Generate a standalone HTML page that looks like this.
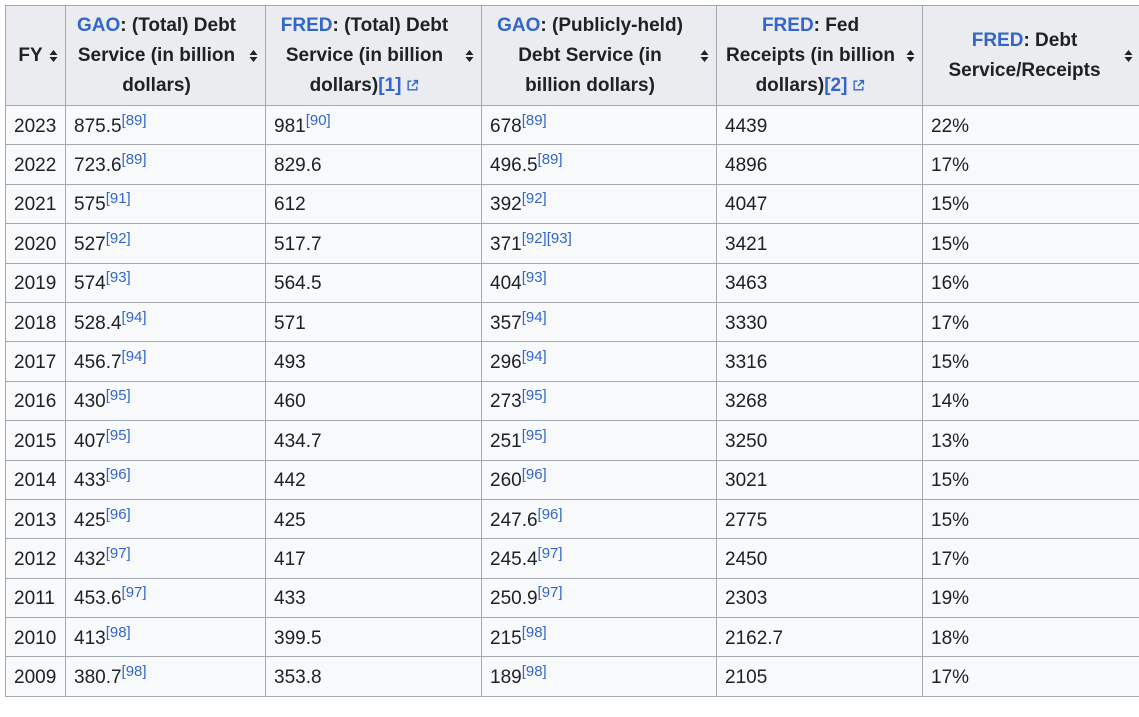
<!DOCTYPE html>
<html><head><meta charset="utf-8"><style>
body{margin:0;background:#fff;font-family:"Liberation Sans",Arial,sans-serif;color:#202122;}
table{position:absolute;left:5px;top:5px;border-collapse:collapse;table-layout:fixed;width:1135px;font-size:19px;background:#f8f9fa;}
th,td{border:1px solid #a2a9b1;}
th{background:#eaecf0;font-weight:bold;height:99px;line-height:30px;position:relative;text-align:center;padding:0 26px 0 8px;}
td{height:35.4px;padding:3px 8px 0 8px;line-height:20px;}
a{color:#3366cc;text-decoration:none}
sup{font-size:15px;line-height:0;vertical-align:7px;}
.s{position:absolute;right:7px;top:50%;margin-top:-8px;width:9px;height:16px;}
.ext{display:inline-block;vertical-align:-1px;margin-left:5px}
</style></head><body>
<table>
<colgroup><col style="width:60px"><col style="width:200px"><col style="width:216px"><col style="width:235px"><col style="width:206px"><col style="width:218px"></colgroup>
<tr>
<th style="padding:0 18px 0 8px">FY<svg class="s" viewBox="0 0 9 16"><path d="M4.5 2L8.5 7H0.5z M4.5 14L8.5 9H0.5z" fill="#202122"/></svg></th>
<th><a>GAO</a>: (Total) Debt Service (in billion dollars)<svg class="s" viewBox="0 0 9 16"><path d="M4.5 2L8.5 7H0.5z M4.5 14L8.5 9H0.5z" fill="#202122"/></svg></th>
<th><a>FRED</a>: (Total) Debt Service (in billion dollars)<a>[1]</a><svg class="ext" width="13" height="13" viewBox="0 0 12 12"><path d="M5 2H2v8h8V7M7 1.5h3.5V5M10.5 1.5L5.5 6.5" stroke="#3366cc" stroke-width="1.3" fill="none"/></svg><svg class="s" viewBox="0 0 9 16"><path d="M4.5 2L8.5 7H0.5z M4.5 14L8.5 9H0.5z" fill="#202122"/></svg></th>
<th><a>GAO</a>: (Publicly-held) Debt Service (in billion dollars)<svg class="s" viewBox="0 0 9 16"><path d="M4.5 2L8.5 7H0.5z M4.5 14L8.5 9H0.5z" fill="#202122"/></svg></th>
<th><a>FRED</a>: Fed<br>Receipts (in billion dollars)<a>[2]</a><svg class="ext" width="13" height="13" viewBox="0 0 12 12"><path d="M5 2H2v8h8V7M7 1.5h3.5V5M10.5 1.5L5.5 6.5" stroke="#3366cc" stroke-width="1.3" fill="none"/></svg><svg class="s" viewBox="0 0 9 16"><path d="M4.5 2L8.5 7H0.5z M4.5 14L8.5 9H0.5z" fill="#202122"/></svg></th>
<th style="padding:0 30px 0 16px"><a>FRED</a>: Debt Service/Receipts<svg class="s" viewBox="0 0 9 16"><path d="M4.5 2L8.5 7H0.5z M4.5 14L8.5 9H0.5z" fill="#202122"/></svg></th>
</tr>
<tr><td>2023</td><td>875.5<sup><a>[89]</a></sup></td><td>981<sup><a>[90]</a></sup></td><td>678<sup><a>[89]</a></sup></td><td>4439</td><td>22%</td></tr>
<tr><td>2022</td><td>723.6<sup><a>[89]</a></sup></td><td>829.6</td><td>496.5<sup><a>[89]</a></sup></td><td>4896</td><td>17%</td></tr>
<tr><td>2021</td><td>575<sup><a>[91]</a></sup></td><td>612</td><td>392<sup><a>[92]</a></sup></td><td>4047</td><td>15%</td></tr>
<tr><td>2020</td><td>527<sup><a>[92]</a></sup></td><td>517.7</td><td>371<sup><a>[92]</a><a>[93]</a></sup></td><td>3421</td><td>15%</td></tr>
<tr><td>2019</td><td>574<sup><a>[93]</a></sup></td><td>564.5</td><td>404<sup><a>[93]</a></sup></td><td>3463</td><td>16%</td></tr>
<tr><td>2018</td><td>528.4<sup><a>[94]</a></sup></td><td>571</td><td>357<sup><a>[94]</a></sup></td><td>3330</td><td>17%</td></tr>
<tr><td>2017</td><td>456.7<sup><a>[94]</a></sup></td><td>493</td><td>296<sup><a>[94]</a></sup></td><td>3316</td><td>15%</td></tr>
<tr><td>2016</td><td>430<sup><a>[95]</a></sup></td><td>460</td><td>273<sup><a>[95]</a></sup></td><td>3268</td><td>14%</td></tr>
<tr><td>2015</td><td>407<sup><a>[95]</a></sup></td><td>434.7</td><td>251<sup><a>[95]</a></sup></td><td>3250</td><td>13%</td></tr>
<tr><td>2014</td><td>433<sup><a>[96]</a></sup></td><td>442</td><td>260<sup><a>[96]</a></sup></td><td>3021</td><td>15%</td></tr>
<tr><td>2013</td><td>425<sup><a>[96]</a></sup></td><td>425</td><td>247.6<sup><a>[96]</a></sup></td><td>2775</td><td>15%</td></tr>
<tr><td>2012</td><td>432<sup><a>[97]</a></sup></td><td>417</td><td>245.4<sup><a>[97]</a></sup></td><td>2450</td><td>17%</td></tr>
<tr><td>2011</td><td>453.6<sup><a>[97]</a></sup></td><td>433</td><td>250.9<sup><a>[97]</a></sup></td><td>2303</td><td>19%</td></tr>
<tr><td>2010</td><td>413<sup><a>[98]</a></sup></td><td>399.5</td><td>215<sup><a>[98]</a></sup></td><td>2162.7</td><td>18%</td></tr>
<tr><td>2009</td><td>380.7<sup><a>[98]</a></sup></td><td>353.8</td><td>189<sup><a>[98]</a></sup></td><td>2105</td><td>17%</td></tr>
</table>
</body></html>
